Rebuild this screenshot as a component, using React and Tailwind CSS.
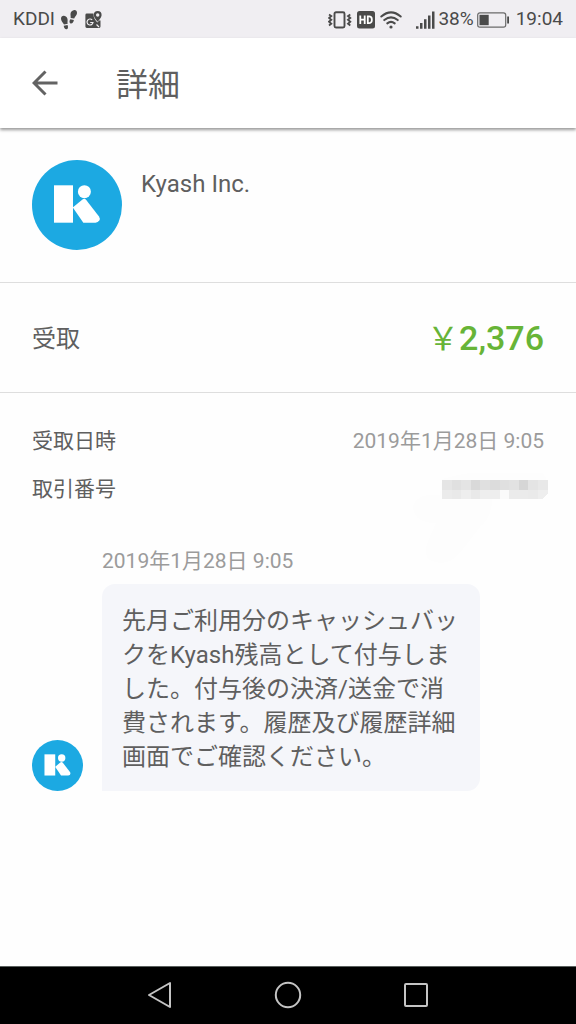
import clsx from 'clsx';

const YEN = '\uFFE5';

const MOSAIC = [
  ['#e5e5e5', '#e0e0e0', '#e4e4e4', '#d9d9d9', '#e0e0e0', '#dcdcdc', '#e0e0e0', '#e2e2e2', '#d6d6d6', '#e4e4e4', '#e8e8e8'],
  ['#ebebeb', '#e9e9e9', '#eeeeee', '#e9e9e9', '#eeeeee', '#eeeeee', '#fafafa', '#ebebeb', '#ebebeb', '#eaeaea', '#eeeeee'],
];

function KyashLogo({ className }) {
  return (
    <svg viewBox="0 0 90 90" className={clsx('shrink-0', className)} role="img" aria-label="Kyash">
      <circle cx="45" cy="45" r="45" fill="#1ca9e2" />
      <g fill="#fff">
        <path d="M22 25.3h19v37.4H22z" />
        <circle cx="52.4" cy="31.7" r="6.5" />
        <path d="M41 47.2 50.5 39.4Q52.6 38 54.4 40.2L67 56.6Q68.4 58.6 67.3 60.6Q66 62.7 63.5 62.7H51.3L41 47.8z" />
      </g>
    </svg>
  );
}

function Footprints() {
  return (
    <svg width="16" height="20" viewBox="0 0 16 20" fill="#4a4a4a" aria-hidden="true">
      <path d="M0 8.8C0 6.700 1.300 5.500 3 5.700c2.100.2 3.500 1.900 3.600 4 .1 1.600-.3 2.600.1 4.100L3 14.400C1.700 12.700.1 11 0 8.800z" />
      <path d="M2.700 15.700 6.500 15c.8 1.800.7 3.900-.8 4.200-1.600.3-2.700-1.300-3-3.500z" />
      <path d="M16 3.200C16.100 1.200 15.100 0 13.400.1c-2.100.2-3.700 1.700-3.900 3.700-.1 1.600.4 2.600.1 4.100l3.600.7c.5-1.800 2.600-3.200 2.800-5.400z" />
      <path d="m12.900 10-3.600-.7c-1 1.700-1.200 3.700.2 4.100 1.700.4 3.100-1.200 3.400-3.400z" />
    </svg>
  );
}

function MapsPin() {
  return (
    <svg width="17" height="18" viewBox="0 0 17 18" aria-hidden="true">
      <path d="M1.800 2.600H8.500C8.300 6.500 10 9 12.300 11.600L14.200 9.500H15.500V15.600Q15.500 17 14.100 17H1.800Q.4 17 .4 15.600V4Q.4 2.600 1.800 2.600z" fill="#4a4a4a" />
      <path fillRule="evenodd" d="M12.700.1a3.900 3.900 0 0 1 3.900 3.900c0 2.600-3.900 6.600-3.900 6.600S8.800 6.600 8.800 4A3.900 3.900 0 0 1 12.700.1zm0 2.200a1.700 1.700 0 1 0 0 3.400 1.700 1.700 0 0 0 0-3.400z" fill="#4a4a4a" />
      <path d="M7.200 8.900A3 3 0 1 0 8 11.500H5.200M11.500 13.500l2.500 2.500" fill="none" stroke="#f0eef2" strokeWidth="1.200" />
    </svg>
  );
}

function Vibrate() {
  return (
    <svg width="24" height="18" viewBox="0 0 24 18" fill="none" stroke="#4a4a4a" aria-hidden="true">
      <rect x="6.5" y="1.3" width="10" height="15.2" rx="1.500" strokeWidth="1.900" />
      <path d="M1 3.500 3.300 5 1 7l2.300 1.800L1 10.700l2.300 2L1 14.500M22.300 3.500 20 5l2.300 2L20 8.800l2.300 1.900-2.300 2 2.300 1.800" strokeWidth="1.800" />
    </svg>
  );
}

function HdBadge() {
  return (
    <svg width="18" height="18" viewBox="0 0 18 18" aria-hidden="true">
      <rect width="18" height="17.5" rx="2.5" fill="#4a4a4a" />
      <path d="M3.300 4.500v8.500M7.700 4.500v8.500M3.300 8.700h4.400M10.800 5.300h1.200a2.800 2.800 0 0 1 2.800 2.800v1.300a2.800 2.800 0 0 1-2.800 2.800h-1.200z" fill="none" stroke="#fff" strokeWidth="1.800" />
    </svg>
  );
}

function Wifi() {
  return (
    <svg width="22" height="18" viewBox="0 0 22 18" fill="none" stroke="#4a4a4a" strokeWidth="2" strokeLinecap="round" aria-hidden="true">
      <path d="M1.300 5.500q9.700-8.200 19.400 0M4.300 9.100q6.700-5.500 13.400 0M7.300 12.400q3.700-3 7.400 0" />
      <circle cx="11" cy="16" r="1.600" fill="#4a4a4a" stroke="none" />
    </svg>
  );
}

function Signal() {
  return (
    <svg width="19" height="18" viewBox="0 0 19 18" fill="#4a4a4a" aria-hidden="true">
      <path d="M0 15.200h2.500v2.500H0zM4 12h2.500v5.700H4zM8 8.200h2.500v9.500H8zM12 4.500h2.500v13.200h-2.500zM16 .5h2.500v17.200H16z" />
    </svg>
  );
}

function Battery() {
  return (
    <svg width="33" height="16" viewBox="0 0 33 16" aria-hidden="true">
      <rect x=".7" y=".8" width="28" height="14.4" rx="2.2" fill="none" stroke="#6b6b6b" strokeWidth="1.200" />
      <path d="M2.500 2.800h9.200v10.400H2.500z" fill="#4a4a4a" />
      <path d="M30.200 4.500h1.800v7h-1.800z" fill="#4a4a4a" />
    </svg>
  );
}

function StatusBar() {
  return (
    <div className="flex h-[38px] items-center justify-between bg-[#f0eef2] px-[13px] pt-px text-[19px] text-[#4a4a4a]">
      <div className="flex items-center">
        <span>KDDI</span>
        <span className="ml-[6px]"><Footprints /></span>
        <span className="ml-2"><MapsPin /></span>
      </div>
      <div className="flex items-center">
        <Vibrate />
        <span className="ml-[5px]"><HdBadge /></span>
        <span className="ml-[5px]"><Wifi /></span>
        <span className="ml-[14px]"><Signal /></span>
        <span className="ml-[3px]">38%</span>
        <span className="ml-[3px]"><Battery /></span>
        <span className="ml-[6px]">19:04</span>
      </div>
    </div>
  );
}

// Transaction number is hidden behind a pixelated patch
function HiddenNumber() {
  return (
    <svg width="136" height="92" viewBox="0 0 136 92" shapeRendering="crispEdges" className="absolute top-0 -right-1" role="img" aria-label="非表示">
      <path d="M30 6Q60-3 90-1H128Q136 2 134 14L128 22 80 26Q80 44 68 54L48 80Q36 94 20 88 10 84 16 68L24 50Q2 50 1 34 4 20 28 22z" fill="#fdfdfd" />
      {MOSAIC.map((row, y) => row.map((color, x) => (
        <rect key={`${x}-${y}`} x={30 + x * 9.6} y={7 + y * 10} width="9.6" height={y === 0 ? 10 : 9} fill={color} />
      )))}
      <path d="M136 20v7h-7z" fill="#fefefe" />
    </svg>
  );
}

export default function App() {
  return (
    <div className="flex min-h-screen flex-col bg-[#fefefe] font-[Roboto,'Noto_Sans_CJK_JP',sans-serif] text-[#5f5f5f]">
      <StatusBar />

      <header className="flex h-[90px] items-center bg-white px-8 shadow-[0_2px_3px_rgba(0,0,0,0.4)]">
        <button aria-label="戻る" className="flex">
          <svg width="26" height="26" viewBox="0 0 26 26" fill="none" stroke="#636363" strokeWidth="3" aria-hidden="true">
            <path d="M25.500 13H2.500M13.500 1.500 2 13l11.500 11.500" />
          </svg>
        </button>
        <h1 className="ml-[58px] pt-1 text-[32px]">詳細</h1>
      </header>

      <main className="flex-1">
        <section className="flex border-b border-[#dedede] p-8">
          <KyashLogo className="size-[90px]" />
          <p className="mt-2 ml-[19px] text-2xl">Kyash Inc.</p>
        </section>

        <section className="flex items-center justify-between border-b border-[#dedede] px-8 pt-[37px] pb-[34px]">
          <span className="text-2xl leading-[37px]">受取</span>
          <span className="text-[34px] leading-[37px] font-medium text-[#67b437]">
            <span className="text-[32px] font-normal">{YEN}</span>2,376
          </span>
        </section>

        <section className="px-8 pt-8">
          <dl className="flex flex-col gap-4 text-[21px] leading-8">
            <div className="flex justify-between">
              <dt>受取日時</dt>
              <dd className="text-[#9b9b9b]">2019年1月28日 9:05</dd>
            </div>
            <div className="relative flex justify-between">
              <dt>取引番号</dt>
              <dd><HiddenNumber /></dd>
            </div>
          </dl>

          <div className="mt-10 flex items-end">
            <KyashLogo className="size-[51px]" />
            <div className="ml-[19px]">
              <time className="block text-[21px] leading-8 text-[#9b9b9b]">2019年1月28日 9:05</time>
              <p className="mt-[7px] max-w-[378px] rounded-[13px] rounded-bl-none bg-[#f5f6fa] px-5 pt-5 pb-[17px] text-2xl leading-[34px]">
                先月ご利用分のキャッシュバックをKyash残高として付与しました。付与後の決済/送金で消費されます。履歴及び履歴詳細画面でご確認ください。
              </p>
            </div>
          </div>
        </section>
      </main>

      <nav className="flex h-[58px] items-center justify-center gap-[100px] border-t border-[#5a605e] bg-black pb-px">
        <button aria-label="Back">
          <svg width="28" height="28" viewBox="0 0 28 28" fill="none" stroke="#c4c4c4" strokeWidth="2" strokeLinejoin="round" aria-hidden="true">
            <path d="M3 14 24 2v24z" />
          </svg>
        </button>
        <button aria-label="Home">
          <svg width="28" height="28" viewBox="0 0 28 28" fill="none" stroke="#c4c4c4" strokeWidth="2" aria-hidden="true">
            <circle cx="14" cy="14" r="12.2" />
          </svg>
        </button>
        <button aria-label="Recent apps">
          <svg width="28" height="28" viewBox="0 0 28 28" fill="none" stroke="#c4c4c4" strokeWidth="2" aria-hidden="true">
            <rect x="3" y="3" width="22" height="22" rx="1" />
          </svg>
        </button>
      </nav>
    </div>
  );
}
